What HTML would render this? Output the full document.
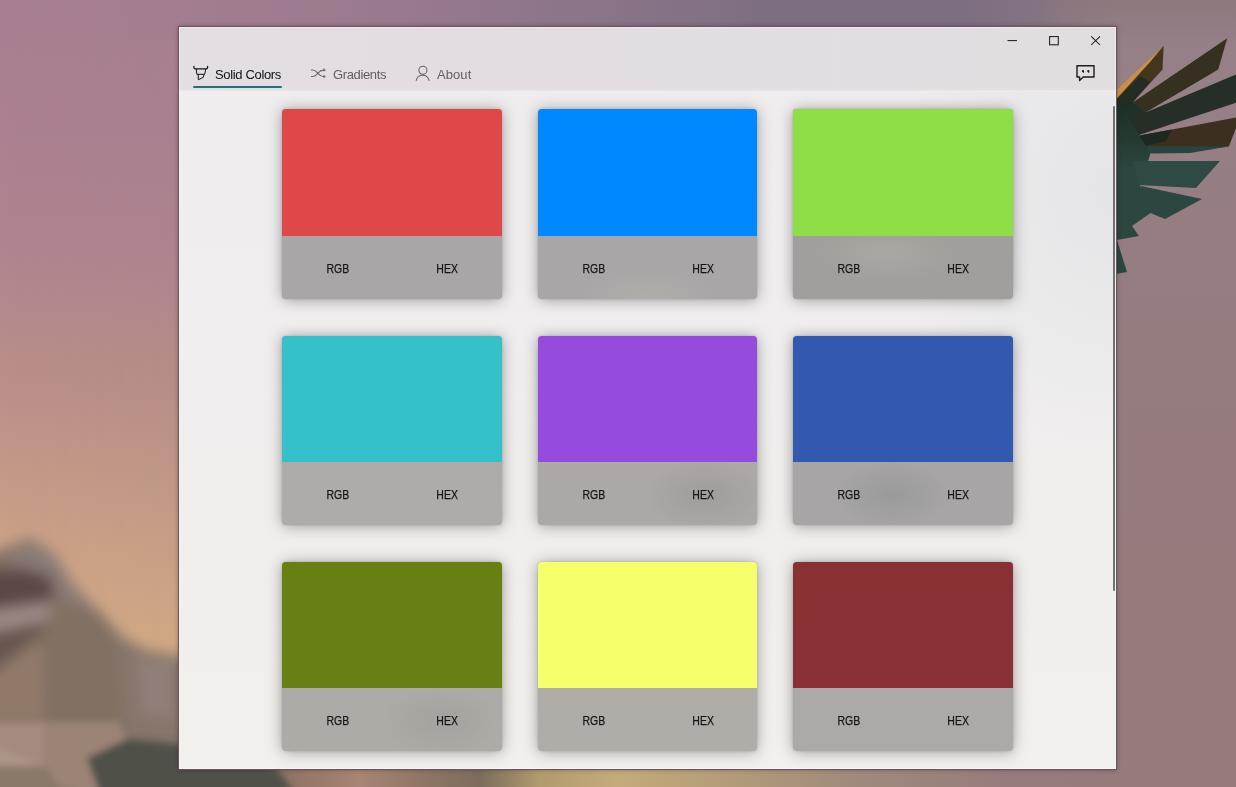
<!DOCTYPE html>
<html lang="en">
<head>
<meta charset="utf-8">
<title>Colors</title>
<style>
*{box-sizing:border-box;margin:0;padding:0}
html,body{width:1236px;height:787px;overflow:hidden;background:#a08590}
body{position:relative;font-family:"Liberation Sans",sans-serif;font-size:13px;color:#111}
#wall{position:absolute;left:0;top:0;width:1236px;height:787px;display:block}
#win{position:absolute;left:178px;top:26px;width:939px;height:744px;border:1px solid #6a555c;background:radial-gradient(ellipse 230px 260px at 100% 22%,rgba(220,223,226,.6),rgba(228,230,232,0) 100%),linear-gradient(#f0edee 9%,#f0eeee 50%,#f2f0ec 100%);box-shadow:0 0 4px rgba(40,20,30,.35)}
#win:after{content:"";position:absolute;left:0;top:0;width:937px;height:742px;box-shadow:inset 0 0 0 1px rgba(255,255,255,.4);pointer-events:none}
#hdr{position:absolute;left:0;top:0;width:937px;height:64px;background:linear-gradient(90deg,#e4dde2,#e3dde1 40%,#e1dee0)}
.tab{position:absolute;top:0;height:64px}
.tab span{position:absolute;top:39.7px;will-change:transform;line-height:16px;white-space:nowrap}
.tab svg{position:absolute;display:block;overflow:visible}
.card{position:absolute;width:219.7px;height:189.6px;border-radius:4px;box-shadow:0 1px 15px rgba(0,0,0,.34),0 0 3px rgba(0,0,0,.16);overflow:hidden;background:#aaa6a8}
.card .c{position:absolute;left:0;top:0;width:220px;height:126.5px}
.card .l{position:absolute;top:126.5px;width:110px;height:63px;line-height:65px;text-align:center;font-size:13px;color:#151515}
.card .l.r{left:0}.card .l.h{left:110px}
.ul{position:absolute;left:0;top:59px;width:89px;height:2px;background:#1f7377;border-radius:1px}
#sb{position:absolute;left:934px;top:79px;width:2px;height:485px;background:#6f6f6f;border-radius:1px}
.card b{font-weight:400;display:inline-block;font-size:12.8px;transform:scaleX(.82);position:relative;left:.1px;-webkit-text-stroke:.25px #151515;transform-origin:50% 50%}
.card .r b{left:.9px}
#hdr:after{content:"";position:absolute;left:0;bottom:-1px;width:937px;height:3px;background:linear-gradient(rgba(240,237,238,0),#f0edee)}
</style>
</head>
<body>
<svg id="wall" viewBox="0 0 1236 787" width="1236" height="787">
<defs>
<linearGradient id="gl" x1="0" y1="0" x2="0" y2="1">
<stop offset="0" stop-color="#a77e93"/><stop offset=".3" stop-color="#ae848f"/><stop offset=".5" stop-color="#bb9089"/><stop offset=".7" stop-color="#cca287"/><stop offset=".82" stop-color="#d6ac84"/><stop offset="1" stop-color="#c9a47e"/>
</linearGradient>
<linearGradient id="gr" x1="0" y1="0" x2="0" y2="1">
<stop offset="0" stop-color="#8d787e"/><stop offset=".06" stop-color="#968088"/><stop offset=".3" stop-color="#957d81"/><stop offset=".6" stop-color="#957b7d"/><stop offset="1" stop-color="#967a7b"/>
</linearGradient>
<linearGradient id="gt" gradientUnits="userSpaceOnUse" x1="0" y1="0" x2="1236" y2="0">
<stop offset="0" stop-color="#a87e92" stop-opacity="0"/><stop offset=".12" stop-color="#a57d91"/><stop offset=".32" stop-color="#987a8c"/><stop offset=".49" stop-color="#8a7487"/><stop offset=".62" stop-color="#7e6e82"/><stop offset=".78" stop-color="#7d6e81"/><stop offset=".84" stop-color="#847380"/><stop offset=".905" stop-color="#8d787e" stop-opacity="0"/>
</linearGradient>
<linearGradient id="gm" x1="0" y1="0" x2="1" y2="0">
<stop offset="0" stop-color="#fff" stop-opacity="0"/><stop offset=".15" stop-color="#fff" stop-opacity=".08"/><stop offset=".65" stop-color="#fff" stop-opacity="1"/><stop offset="1" stop-color="#fff" stop-opacity="1"/>
</linearGradient>
<mask id="mk"><rect width="1236" height="787" fill="url(#gm)"/></mask>
<filter id="b8" x="-20%" y="-20%" width="140%" height="140%"><feGaussianBlur stdDeviation="7"/></filter>
<filter id="b4" x="-20%" y="-20%" width="140%" height="140%"><feGaussianBlur stdDeviation="3.5"/></filter>
<linearGradient id="gb" gradientUnits="userSpaceOnUse" x1="180" y1="0" x2="1236" y2="0">
<stop offset="0" stop-color="#55574d"/><stop offset=".062" stop-color="#5a5a50"/><stop offset=".085" stop-color="#8a6e60"/><stop offset=".17" stop-color="#a88474"/><stop offset=".237" stop-color="#8c7464"/><stop offset=".284" stop-color="#7c6c5c"/><stop offset=".34" stop-color="#b09a6e"/><stop offset=".414" stop-color="#c4ab7a"/><stop offset=".49" stop-color="#b8a078"/><stop offset=".635" stop-color="#a08a7c"/><stop offset=".78" stop-color="#967c7c"/><stop offset="1" stop-color="#967a7b"/>
</linearGradient>
<linearGradient id="gw" gradientUnits="userSpaceOnUse" x1="0" y1="95" x2="0" y2="170"><stop offset="0" stop-color="#1d2b25"/><stop offset=".5" stop-color="#23382f"/><stop offset="1" stop-color="#2c4640"/></linearGradient>
</defs>
<rect width="1236" height="787" fill="url(#gl)"/>
<rect width="1236" height="787" fill="url(#gr)" mask="url(#mk)"/>
<rect x="0" y="0" width="1236" height="40" fill="url(#gt)"/>
<!-- bottom strip -->
<rect x="170" y="760" width="1066" height="27" fill="url(#gb)"/>
<!-- mountain -->
<g filter="url(#b8)">
<polygon points="-20,556 12,546 30,538 54,554 73,584 102,615 125,639 146,650 200,660 260,700 260,800 -20,800" fill="#826f62"/>
<polygon points="30,540 54,554 73,584 95,610 60,600 44,580 20,567 0,565" fill="#8a7a76"/>
<polygon points="100,612 125,639 146,650 200,660 230,745 127,739 119,722 116,650" fill="#85756b"/>
<polygon points="135,655 175,662 175,720 140,715" fill="#8f7f78"/>
<polygon points="-20,571 20,567 51,576 56,601 -20,612" fill="#5c4846"/>
<polygon points="-20,612 56,601 44,622 -20,634" fill="#9d8985"/>
<polygon points="-20,634 44,622 42,635 -20,682" fill="#675650"/>
<polygon points="-20,682 42,637 44.6,722 -20,722" fill="#917969"/>
</g>
<g filter="url(#b4)">
<polygon points="-20,722 44.6,722 44.6,766 -20,766" fill="#a48b7f"/>
<polygon points="-20,741 44.6,766 -20,766" fill="#ad9488"/>
<polygon points="44.6,722 119,722 127,739 87,758 102,800 59.4,787 44.6,766" fill="#9b8376"/>
<polygon points="-20,766 44.6,766 59.4,787 62,800 -20,800" fill="#8a7868"/>
<polygon points="87,758 127.4,738.9 200,747 270,760 300,800 102,800" fill="#4f5149"/>
</g>
<g>
<polygon points="1110,93 1127,96 1146,112.6 1139,135 1151,152 1140,186 1152,212 1132,226 1139,236 1117,240 1127,272 1110,275" fill="url(#gw)"/>
<polygon points="1110,99 1163.7,45.7 1162.5,69.6 1132.3,102.7 1122,100" fill="#45351f"/>
<polygon points="1112,104 1140,76 1150,82 1132.3,102.7" fill="#232c22"/>
<polygon points="1110,96 1163.7,45.7 1150,62 1117.4,98 1110,102" fill="#c98f48"/>
<polygon points="1132.3,102.7 1227.2,38.3 1218.2,69.6 1145.5,112.6" fill="#35301f"/>
<polygon points="1145.5,112.6 1236,74.6 1236,102.7 1138.9,134.9 1128,118" fill="#262f27"/>
<polygon points="1138.9,135.7 1236,117.5 1236,128 1228.9,146.4 1151.3,152.2" fill="#3c2f20"/>
<polygon points="1139,135.5 1172,129.5 1166,141 1146,146" fill="#1d2820"/>
<polygon points="1146,146 1228.9,146.4 1190,153 1151.3,153.5" fill="#29443e"/>
<polygon points="1132,161 1220,161 1196,188 1139,185" fill="#2f4a45"/>
<polygon points="1141,186 1202,199 1165,219 1131,205" fill="#2c4641"/>
</g>
</svg>
<div id="win">
 <div id="hdr">
  <div class="tab" style="left:14px;width:90px;color:#111">
   <svg style="left:0;top:39.3px" width="16" height="15" viewBox="0 0 16 15" fill="none" stroke="#161616" stroke-width="1.15" stroke-linejoin="round" stroke-linecap="round"><path d="M0.9 0.4V1.6Q0.9 2.95 2.3 2.95H13.2Q14.6 2.95 14.6 1.6V0.4" stroke-width="1.25"/><path d="M3.3 3.2L3.8 8.3H11.7L12.7 3.2" stroke-width="1"/><path d="M5.3 8.5V13.7L10.2 11.4L11 8.5" stroke-width="1"/></svg>
   <span style="left:22.3px;letter-spacing:-.34px">Solid Colors</span>
   <i class="ul"></i>
  </div>
  <div class="tab" style="left:132px;width:80px;color:#635e63">
   <svg style="left:-.5px;top:40px" width="16" height="13" viewBox="0 0 16 13" fill="none" stroke="#6a656a" stroke-width="1.1" stroke-linecap="round" stroke-linejoin="round"><path d="M0.5 3H1.6C4.6 3 5.4 4.8 6.8 6.2S9.6 9.5 12.4 9.5H13.4"/><path d="M0.5 9.5H1.6C4.6 9.5 5.4 7.7 6.8 6.2S9.6 3.1 12.4 3.1H13.4"/><path d="M12.6 1.1L14.7 3.1L12.6 5.1Z" fill="#6a656a" stroke="none"/><path d="M12.6 7.5L14.7 9.5L12.6 11.5Z" fill="#6a656a" stroke="none"/></svg>
   <span style="left:22px;letter-spacing:-.37px">Gradients</span>
  </div>
  <div class="tab" style="left:237px;width:70px;color:#635e63">
   <svg style="left:0;top:39px" width="14" height="16" viewBox="0 0 14 16" fill="none" stroke="#6a656a" stroke-width="1.05" stroke-linecap="round"><circle cx="6.9" cy="4.3" r="4.05"/><path d="M0.2 14.4A6.55 6.55 0 0 1 13 14.4"/></svg>
   <span style="left:21.4px;letter-spacing:.08px">About</span>
  </div>
  <svg class="wc" style="position:absolute;left:820px;top:0" width="117" height="64" viewBox="999 27 117 64" fill="none" stroke="#1c1c1c" stroke-width="1.05">
   <path d="M1007.5 40.6H1017"/>
   <rect x="1049.6" y="36.6" width="8.7" height="8.2"/>
   <path d="M1091.2 36.3L1100 45M1100 36.3L1091.2 45"/>
   <path d="M1077 65.7H1094V77.05H1083.2L1079.6 80.5V77.05H1077Z" stroke-width="1.4" stroke-linejoin="round"/>
   <path d="M1081.9 71.2a1.1 1.1 0 1 1 2.2 0c0 .9-.3 1.5-.8 1.9h-.7c.3-.3.5-.6.5-.9a1.1 1.1 0 0 1-1.2-1zM1087.2 71.2a1.1 1.1 0 1 1 2.2 0c0 .9-.3 1.5-.8 1.9h-.7c.3-.3.5-.6.5-.9a1.1 1.1 0 0 1-1.2-1z" fill="#1c1c1c" stroke="none"/>
  </svg>
 </div>
 <div class="card" style="left:103px;top:82.3px;background:#aaa6a8"><div class="c" style="background:#de4848"></div><div class="l r"><b>RGB</b></div><div class="l h"><b>HEX</b></div></div>
 <div class="card" style="left:358.8px;top:82.3px;background:radial-gradient(ellipse 70px 26px at 50% 98%,#b0aca8,rgba(176,172,168,0)),#a9a6a8"><div class="c" style="background:#0088ff"></div><div class="l r"><b>RGB</b></div><div class="l h"><b>HEX</b></div></div>
 <div class="card" style="left:614.3px;top:82.3px;background:radial-gradient(ellipse 70px 30px at 42% 76%,#aaa8a3,rgba(170,168,163,0)),#a09f9d"><div class="c" style="background:#8edf47"></div><div class="l r"><b>RGB</b></div><div class="l h"><b>HEX</b></div></div>
 <div class="card" style="left:103px;top:308.6px;background:#afaba8"><div class="c" style="background:#35c1ca"></div><div class="l r"><b>RGB</b></div><div class="l h"><b>HEX</b></div></div>
 <div class="card" style="left:358.8px;top:308.6px;background:radial-gradient(ellipse 60px 34px at 76% 84%,#9f9d9b,rgba(159,157,155,0)),#aba8a6"><div class="c" style="background:#944bde"></div><div class="l r"><b>RGB</b></div><div class="l h"><b>HEX</b></div></div>
 <div class="card" style="left:614.3px;top:308.6px;background:radial-gradient(ellipse 60px 34px at 45% 84%,#9b9a9a,rgba(155,154,154,0)),#a7a5a5"><div class="c" style="background:#3358b0"></div><div class="l r"><b>RGB</b></div><div class="l h"><b>HEX</b></div></div>
 <div class="card" style="left:103px;top:534.7px;background:radial-gradient(ellipse 60px 34px at 72% 84%,#a5a19d,rgba(165,161,157,0)),#aeaaa6"><div class="c" style="background:#687f14"></div><div class="l r"><b>RGB</b></div><div class="l h"><b>HEX</b></div></div>
 <div class="card" style="left:358.8px;top:534.7px;background:#b0ada8"><div class="c" style="background:#f4ff69"></div><div class="l r"><b>RGB</b></div><div class="l h"><b>HEX</b></div></div>
 <div class="card" style="left:614.3px;top:534.7px;background:#ada9a8"><div class="c" style="background:#893035"></div><div class="l r"><b>RGB</b></div><div class="l h"><b>HEX</b></div></div>
 <i id="sb"></i>
</div>
</body>
</html>
